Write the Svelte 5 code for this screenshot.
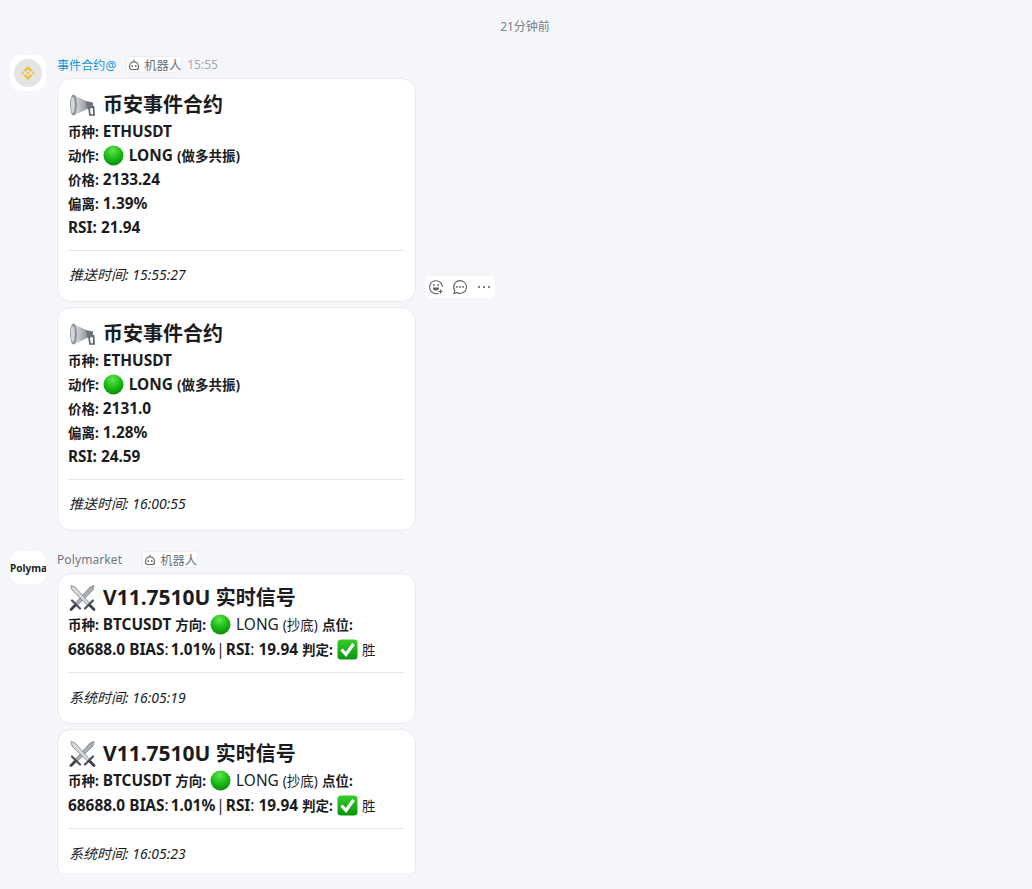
<script>
  const first = [
    { price: '2133.24', bias: '1.39%', rsi: '21.94', time: '15:55:27', tools: true },
    { price: '2131.0', bias: '1.28%', rsi: '24.59', time: '16:00:55', tools: false }
  ];
  const second = ['16:05:19', '16:05:23'];
</script>

{#snippet ball()}
  <svg class="emoji ball" viewBox="0 0 21 21" aria-hidden="true">
    <circle cx="10.500" cy="10.500" r="10" fill="url(#ballFill)" />
  </svg>
{/snippet}

{#snippet robot()}
  <svg class="robot" viewBox="0 0 12 12" aria-hidden="true">
    <path d="M1.500 7.300a4.500 4.500 0 0 1 9 0v1.200a2 2 0 0 1-2 2h-5a2 2 0 0 1-2-2z" fill="#fff" stroke="#666b72" stroke-width="1.200" />
    <circle cx="6" cy="1.500" r="1" fill="#e58a3c" />
    <circle cx="4.200" cy="7" r="0.900" fill="#666b72" />
    <circle cx="7.800" cy="7" r="0.900" fill="#666b72" />
  </svg>
{/snippet}

{#snippet horn()}
  <svg class="bigemoji" viewBox="0 0 28 28" aria-hidden="true">
    <path d="M5 3.500 L18 10 L20 17.500 L6 24.500 Z" fill="url(#hornFill)" />
    <ellipse cx="5.500" cy="14" rx="3.500" ry="10.500" fill="#8f9499" />
    <ellipse cx="4.800" cy="14" rx="2" ry="8" fill="#d3d6d9" />
    <path d="M17.500 10 L25 11.500 L25 17 L19.500 18 Z" fill="#6f747a" />
    <path d="M21 17 L22 24 L26 24 L25.500 15" fill="none" stroke="#5c6167" stroke-width="1.700" />
  </svg>
{/snippet}

{#snippet swords()}
  <svg class="bigemoji" viewBox="0 0 28 28" aria-hidden="true">
    <path d="M26 1.500 L25 6 L9 21.500 L7 19.500 L22 3 Z" fill="#a9afb5" stroke="#6f757b" stroke-width="0.700" />
    <path d="M3 1.500 L4 6 L20 21.500 L22 19.500 L7 3 Z" fill="#d5d9dd" stroke="#6f757b" stroke-width="0.700" />
    <path d="M4 16.500 L12 24.500 M25 16.500 L17 24.500" stroke="#4c5157" stroke-width="2.200" stroke-linecap="round" />
    <path d="M7 21.500 L3 25.500 M22 21.500 L26 25.500" stroke="#3c4046" stroke-width="2.800" stroke-linecap="round" />
  </svg>
{/snippet}

{#snippet check()}
  <svg class="emoji" viewBox="0 0 21 21" aria-hidden="true">
    <rect x="0.500" y="0.500" width="20" height="20" rx="3.500" fill="url(#checkFill)" />
    <path d="M4.500 10.500 L9 15.500 L16.500 5" fill="none" stroke="#fff" stroke-width="3.200" />
  </svg>
{/snippet}

<svg class="defs" width="0" height="0" aria-hidden="true">
  <defs>
    <radialGradient id="ballFill" cx="0.450" cy="0.250" r="0.850">
      <stop offset="0" stop-color="#5ee84a" />
      <stop offset="0.550" stop-color="#17b414" />
      <stop offset="1" stop-color="#067f09" />
    </radialGradient>
    <linearGradient id="checkFill" x1="0" y1="0" x2="0" y2="1">
      <stop offset="0" stop-color="#35cf2a" />
      <stop offset="1" stop-color="#0a930e" />
    </linearGradient>
    <linearGradient id="hornFill" x1="0" y1="0" x2="1" y2="0">
      <stop offset="0" stop-color="#e3e5e7" />
      <stop offset="1" stop-color="#8d9298" />
    </linearGradient>
  </defs>
</svg>

<main class="page">
  <div class="stamp">21分钟前</div>

  <section class="group">
    <div class="avatar">
      <div class="disc">
        <svg viewBox="0 0 32 32" width="14" height="14" aria-hidden="true">
          <path d="M9.790 13.450 16 7.240l6.210 6.210 3.610-3.610L16 0 6.180 9.840zM0 16l3.610-3.610L7.220 16l-3.610 3.610zM9.790 18.550 16 24.760l6.210-6.210 3.610 3.610L16 32l-9.820-9.840zM24.780 16l3.610-3.610L32 16l-3.610 3.610zM19.660 16 16 12.340 12.340 16 16 19.660z" fill="#f0b90b" opacity="0.800" />
        </svg>
      </div>
    </div>
    <div class="body">
      <header class="head">
        <span class="name blue">事件合约@</span>
        <span class="tag">{@render robot()}机器人</span>
        <span class="clock">15:55</span>
      </header>
      {#each first as m}
        <article class="card event">
          <h2>{@render horn()}<span>币安事件合约</span></h2>
          <p class="line"><b><span class="c">币种:</span> ETHUSDT</b></p>
          <p class="line"><b><span class="c">动作:</span> {@render ball()} LONG <span class="c">(做多共振)</span></b></p>
          <p class="line"><b><span class="c">价格:</span> {m.price}</b></p>
          <p class="line"><b><span class="c">偏离:</span> {m.bias}</b></p>
          <p class="line"><b>RSI: {m.rsi}</b></p>
          <hr />
          <p class="foot"><em>推送时间: {m.time}</em></p>
          {#if m.tools}
            <div class="tools">
              <svg viewBox="0 0 16 16" width="16" height="16" aria-hidden="true">
                <path d="M10.500 14.200A6.500 6.500 0 1 1 14.500 8" fill="none" stroke="#5d6268" stroke-width="1.100" />
                <path d="M4.800 8.500h6.200a3.100 3.100 0 0 1-6.200 0z" fill="#5d6268" />
                <circle cx="5.800" cy="6" r="0.900" fill="#5d6268" /><circle cx="10.200" cy="6" r="0.900" fill="#5d6268" />
                <path d="M12.500 10.500v4M10.500 12.500h4" stroke="#5d6268" stroke-width="1.200" />
              </svg>
              <svg viewBox="0 0 16 16" width="16" height="16" aria-hidden="true">
                <path d="M8 1.600a6.400 6.400 0 1 1-3 12l-3 .8.800-2.800A6.400 6.400 0 0 1 8 1.600z" fill="none" stroke="#5d6268" stroke-width="1.100" />
                <circle cx="5" cy="8" r="0.900" fill="#5d6268" /><circle cx="8" cy="8" r="0.900" fill="#5d6268" /><circle cx="11" cy="8" r="0.900" fill="#5d6268" />
              </svg>
              <svg viewBox="0 0 16 16" width="16" height="16" aria-hidden="true">
                <circle cx="3" cy="8" r="1.100" fill="#5d6268" /><circle cx="8" cy="8" r="1.100" fill="#5d6268" /><circle cx="13" cy="8" r="1.100" fill="#5d6268" />
              </svg>
            </div>
          {/if}
        </article>
      {/each}
    </div>
  </section>

  <section class="group later">
    <div class="avatar poly"><span>Polymarket</span></div>
    <div class="body">
      <header class="head">
        <span class="name">Polymarket</span>
        <span class="tag wide">{@render robot()}机器人</span>
      </header>
      {#each second as time}
        <article class="card signal">
          <h2>{@render swords()}<span><span class="t">V11.7510U</span> 实时信号</span></h2>
          <p class="line"><b><span class="c">币种:</span> BTCUSDT <span class="c">方向:</span></b> {@render ball()} LONG <span class="c">(抄底)</span> <b><span class="c">点位:</span> 68688.0 BIAS</b>: <b class="nudge">1.01%</b> <span class="pipe">|</span> <b>RSI</b>: <b>19.94 <span class="c">判定:</span></b> {@render check()} <span class="c">胜</span></p>
          <hr />
          <p class="foot"><em>系统时间: {time}</em></p>
        </article>
      {/each}
    </div>
  </section>
</main>

<style>
  :global(body) {
    margin: 0;
    background: #f5f6fa;
  }
  .defs {
    position: absolute;
  }
  .page {
    height: 873px;
    overflow: hidden;
    box-sizing: border-box;
    padding: 18px 0 0 10px;
    font-family: "Noto Sans", "Noto Sans CJK SC", sans-serif;
    color: #1b1c1f;
  }
  .stamp {
    text-align: center;
    font-size: 12px;
    line-height: 18px;
    color: #7d8085;
    padding-left: 8px;
    width: 1022px;
    box-sizing: border-box;
  }
  .group {
    display: flex;
    gap: 11px;
    margin-top: 20px;
  }
  .group.later {
    margin-top: 15px;
  }
  .avatar {
    width: 36px;
    height: 36px;
    flex: none;
    margin-top: -1px;
    background: #fff;
    border-radius: 10px;
    display: flex;
    align-items: center;
    justify-content: center;
    overflow: hidden;
  }
  .disc {
    width: 28px;
    height: 28px;
    border-radius: 50%;
    background: #e4e4e4;
    display: flex;
    align-items: center;
    justify-content: center;
  }
  .avatar.poly {
    height: 33px;
    margin-top: 0;
    justify-content: flex-start;
    font-size: 10px;
    font-weight: 700;
    white-space: nowrap;
    color: #222;
  }
  .body {
    width: 359px;
  }
  .head {
    display: flex;
    align-items: center;
    height: 17px;
    font-size: 12px;
    color: #73777d;
    margin-bottom: 5px;
  }
  .name.blue {
    color: #0f93d8;
  }
  .name {
    letter-spacing: 0.100px;
  }
  .tag {
    display: inline-flex;
    align-items: center;
    gap: 3px;
    margin-left: 10px;
    height: 17px;
    box-sizing: border-box;
    background: #fff;
    border: 1px solid #eceef1;
    border-radius: 3px;
    font-size: 12.300px;
    color: #6c7076;
  }
  .tag.wide {
    margin-left: 20px;
  }
  .robot {
    width: 12px;
    height: 12px;
    margin: 0 1px;
  }
  .clock {
    margin-left: 5px;
    color: #a6a9ae;
  }
  .card {
    position: relative;
    box-sizing: border-box;
    width: 359px;
    background: #fff;
    border: 1px solid #e8eaee;
    border-radius: 14px;
    padding: 10px 11px 14px 10px;
    margin-bottom: 5px;
  }
  h2 {
    display: flex;
    align-items: center;
    gap: 7px;
    margin: 0 0 1px;
    font-size: 20px;
    line-height: 28px;
    font-weight: 700;
  }
  .event h2 {
    padding-top: 2px;
  }
  .signal h2 {
    margin-bottom: 0;
  }
  .t {
    font-size: 21px;
    line-height: 1;
  }
  .bigemoji {
    width: 28px;
    height: 28px;
    flex: none;
  }
  .line {
    margin: 0;
    font-size: 15.400px;
    line-height: 24px;
    font-weight: 400;
  }
  .signal .line {
    line-height: 25px;
  }
  .c {
    font-size: 13.500px;
    line-height: 1;
  }
  .nudge {
    margin-left: -2px;
  }
  .pipe {
    margin: 0 -3px;
  }
  .emoji {
    width: 21px;
    height: 21px;
    vertical-align: -5px;
  }
  .ball {
    margin-right: 1px;
  }
  hr {
    border: 0;
    border-top: 1px solid #e3e5e9;
    margin: 10px 0 12px;
  }
  .signal hr {
    margin: 10px 0 13px;
  }
  .signal {
    padding-bottom: 13px;
  }
  .foot {
    margin: 0;
    padding-left: 1px;
    font-size: 14px;
    line-height: 24px;
  }
  .tools {
    position: absolute;
    left: 367px;
    bottom: 3px;
    width: 70px;
    height: 22px;
    background: #fff;
    border-radius: 4px;
    display: flex;
    align-items: center;
    gap: 8px;
    box-sizing: border-box;
    padding: 0 3px;
  }
</style>
